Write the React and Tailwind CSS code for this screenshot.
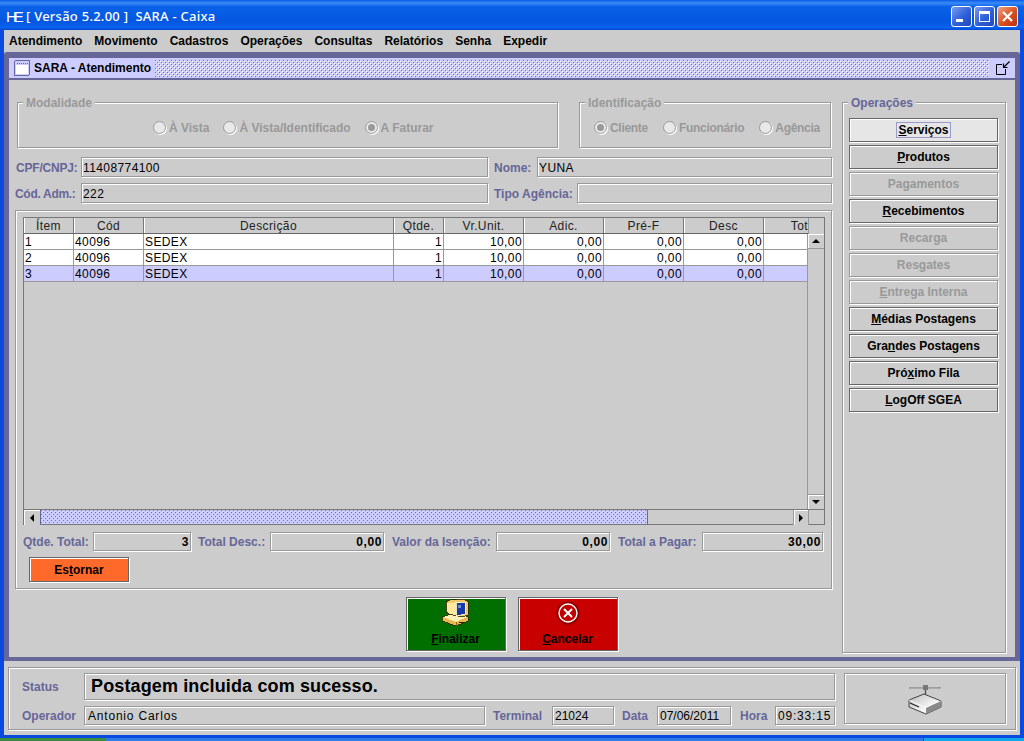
const F = { fontFamily: '"Liberation Sans", Arial, sans-serif' };

function Etched({ className = "", children }) {
  return <div className={"border border-[#999999] shadow-[1px_1px_0_#ffffff,inset_1px_1px_0_#ffffff] " + className}>{children}</div>;
}

function Group({ title, className = "", disabled, children }) {
  return (
    <Etched className={"relative " + className}>
      <span className={"absolute -top-[7px] left-[5px] bg-[#cccccc] px-[3px] text-[12px] font-bold leading-[14px] " + (disabled ? "text-[#999999]" : "text-[#666699]")}>{title}</span>
      {children}
    </Etched>
  );
}

function Radio({ label, checked, className = "", tight }) {
  return (
    <div className={"flex items-center gap-[3px] " + className}>
      <span className="flex h-[13px] w-[13px] items-center justify-center rounded-full border border-[#999999] bg-[#e8e8e8] shadow-[1px_1px_0_#ffffff]">
        {checked && <span className="h-[7px] w-[7px] rounded-full bg-[#999999]" />}
      </span>
      <span className={"text-[12px] font-bold text-[#999999] " + (tight ? "tracking-[-0.3px]" : "")}>{label}</span>
    </div>
  );
}

function Label({ children, className = "" }) {
  return <span className={"pt-[1px] text-[12px] font-bold text-[#666699] " + className}>{children}</span>;
}

function Field({ children, className = "", right, bold }) {
  return (
    <Etched className={"flex items-center pt-[1px] text-[12px] text-black " + (right ? "justify-end pr-[1px] tracking-[0.6px] " : "pl-[1px] tracking-[0.4px] ") + (bold ? "font-bold " : "") + className}>
      {children}
    </Etched>
  );
}

function SideBtn({ label, u, disabled, focused }) {
  const i = u ? label.indexOf(u) : -1;
  return (
    <button className={"flex h-[24px] w-[149px] items-center justify-center text-[12px] font-bold shadow-[1px_1px_0_#ffffff,inset_1px_1px_0_#ffffff] border " +
      (disabled ? "border-[#999999] text-[#999999] " : "border-[#666666] text-black ") + (focused ? "bg-[#e6e6e6]" : "bg-[#cccccc]")}>
      <span className={focused ? "border border-[#9999cc] px-[1px] leading-[14px]" : ""}>
        {i < 0 ? label : <>{label.slice(0, i)}<span className="underline">{u}</span>{label.slice(i + u.length)}</>}
      </span>
    </button>
  );
}

const widths = [50, 70, 250, 50, 80, 80, 80, 80, 44];
const heads = ["Ítem", "Cód", "Descrição", "Qtde.", "Vr.Unit.", "Adic.", "Pré-F", "Desc", "Tot"];

function Row({ n, selected }) {
  const cells = [n, "40096", "SEDEX", "1", "10,00", "0,00", "0,00", "0,00", ""];
  return (
    <div className={"flex h-[16px] border-b border-[#999999] " + (selected ? "bg-[#ccccff]" : "bg-white")}>
      {cells.map((c, i) => (
        <div key={i} style={{ width: widths[i] }} className={"shrink-0 overflow-hidden px-[1px] text-[12px] leading-[16px] tracking-[0.4px] text-black " + (i < 8 ? "border-r border-[#999999] " : "") + (i > 2 ? "text-right" : "text-left")}>{c}</div>
      ))}
    </div>
  );
}

function ScrollBtn({ children, className = "" }) {
  return <div className={"flex h-[15px] w-[16px] shrink-0 items-center justify-center bg-[#cccccc] shadow-[inset_1px_1px_0_#ffffff] " + className}>{children}</div>;
}

function Tri({ dir }) {
  const p = { up: "0,4 4,0 8,4", down: "0,0 8,0 4,4", left: "4,0 4,8 0,4", right: "0,0 4,4 0,8" }[dir];
  const vert = dir === "up" || dir === "down";
  return <svg width={vert ? 8 : 4} height={vert ? 4 : 8}><polygon points={p} fill="#000" /></svg>;
}

function WindowIcon() {
  return (
    <svg width="16" height="16" viewBox="0 0 16 16" shapeRendering="crispEdges">
      <rect x="0.5" y="0.5" width="15" height="15" rx="1.5" fill="#ccccff" stroke="#666699" />
      <rect x="2" y="5" width="12" height="9" fill="#ffffff" />
      <path d="M3 3.5h1M5 3.5h1M7 3.5h1M9 3.5h1M11 3.5h1M13 3.5h1" stroke="#666699" />
    </svg>
  );
}

function DetachIcon() {
  return (
    <svg width="14" height="14" viewBox="0 0 14 14" fill="none" stroke="#000">
      <path d="M6 3.5H0.5V13.5H9.5V8" />
      <path d="M13.5 0.5L7.5 6.5" strokeWidth="1.3" />
      <path d="M7.5 2.5V6.5H11.5" strokeWidth="1.2" />
    </svg>
  );
}

function Computer() {
  return (
    <svg width="29" height="28" viewBox="0 0 29 28" shapeRendering="crispEdges">
      <path d="M0 20l6-3 12 6-4 3z" fill="#003a00" />
      <path d="M1 18l14-5 12 5v4l-12 5-14-5z" fill="#e8b850" stroke="#2a2008" strokeWidth="0.8" />
      <path d="M2 18l13 5 11-5-11-4z" fill="#fff0b8" />
      <path d="M15 23v4" stroke="#8a6818" strokeWidth="1" />
      <path d="M18 23h5v1h-5z" fill="#2a2008" />
      <path d="M5 3l4-2 14-1 4 3v13l-6 2-13-3-3-2z" fill="#f0c868" stroke="#2a2008" strokeWidth="0.8" />
      <path d="M6 4l13-1v14l-10-2-3-2z" fill="#ffe8a0" />
      <path d="M15 4l9-1v12l-9 2z" fill="#1838a8" stroke="#fff4c0" strokeWidth="0.9" />
      <path d="M17 6h3v3h-3z" fill="#6890e0" />
    </svg>
  );
}

function CancelIcon() {
  return (
    <svg width="24" height="24" viewBox="0 0 24 24">
      <circle cx="12" cy="12" r="11.5" fill="#8f0000" />
      <circle cx="12" cy="12" r="9" fill="#c00000" stroke="#ffffff" strokeWidth="1.4" />
      <path d="M8 8L16 16M16 8L8 16" stroke="#ffffff" strokeWidth="2" />
    </svg>
  );
}

function Router() {
  return (
    <svg width="34" height="32" viewBox="0 0 34 32">
      <defs>
        <linearGradient id="routerTop" x1="0" y1="0" x2="1" y2="1">
          <stop offset="0" stopColor="#b8b8b8" />
          <stop offset="0.6" stopColor="#f4f4f4" />
          <stop offset="1" stopColor="#ffffff" />
        </linearGradient>
      </defs>
      <path d="M1 4.5H33" stroke="#888888" strokeWidth="2" />
      <path d="M1 3.8H33" stroke="#ffffff" strokeWidth="0.6" />
      <rect x="15" y="2" width="5" height="5" fill="#777777" />
      <path d="M17.5 7V13" stroke="#555555" strokeWidth="1.4" />
      <path d="M1 17L16 11L33 18V24L18 31L1 24Z" fill="url(#routerTop)" stroke="#444444" strokeWidth="1" />
      <path d="M1 17L18 25L33 18" fill="none" stroke="#ffffff" strokeWidth="0.8" />
      <path d="M18 25V31L33 24V18Z" fill="#8a8a8a" />
      <path d="M2 20L11 24" stroke="#222222" strokeWidth="1.3" />
    </svg>
  );
}

function TitleButton({ kind }) {
  const bg = kind === "close"
    ? "bg-[linear-gradient(135deg,#f0a080,#d8501f_55%,#b83010)]"
    : "bg-[linear-gradient(135deg,#7c9df0,#2d5fd8_55%,#2448b8)]";
  return (
    <div className={"flex h-[21px] w-[21px] items-center justify-center rounded-[3px] border border-white " + bg}>
      {kind === "min" && <span className="mt-[9px] mr-[4px] h-[3px] w-[7px] bg-white" />}
      {kind === "max" && <span className="h-[11px] w-[11px] border border-t-[3px] border-white" />}
      {kind === "close" && (
        <svg width="11" height="11" viewBox="0 0 11 11"><path d="M1 1L10 10M10 1L1 10" stroke="#fff" strokeWidth="2.2" /></svg>
      )}
    </div>
  );
}

const bumps = "bg-[radial-gradient(circle_at_0.5px_0.5px,#6f6fb0_0.7px,transparent_0.8px),radial-gradient(circle_at_2.5px_2.5px,#6f6fb0_0.7px,transparent_0.8px),radial-gradient(circle_at_1.5px_1.5px,#ffffff_0.7px,transparent_0.8px),radial-gradient(circle_at_3.5px_3.5px,#ffffff_0.7px,transparent_0.8px)] bg-[length:4px_4px]";

export default function App() {
  const menus = ["Atendimento", "Movimento", "Cadastros", "Operações", "Consultas", "Relatórios", "Senha", "Expedir"];
  return (
    <div style={F} className="flex h-[741px] w-[1024px] flex-col overflow-hidden bg-[#0a4ae0]">
      {/* Title bar */}
      <div className="flex h-[30px] shrink-0 items-center bg-[linear-gradient(180deg,#0a5ae8_0%,#3a8cf8_10%,#0a62e8_22%,#0456e0_70%,#0a62f0_92%,#0048d0_100%)] pt-[2px] pr-[6px] pl-[6px]">
        <span className="mr-[6px] w-[14px] overflow-visible text-[15px] leading-none font-normal tracking-[-3px] text-white">HE</span>
        <span style={{ fontFamily: '"Noto Sans", sans-serif' }} className="pt-[2px] text-[13px] font-medium tracking-[0.25px] whitespace-pre text-white">[ Versão 5.2.00 ]  SARA - Caixa</span>
        <div className="ml-auto flex gap-[2px]">
          <TitleButton kind="min" />
          <TitleButton kind="max" />
          <TitleButton kind="close" />
        </div>
      </div>

      {/* Window client */}
      <div className="mx-[4px] flex h-[705px] shrink-0 flex-col bg-[#cccccc]">
        <div className="flex h-[22px] shrink-0 items-center gap-[12px] pl-[5px]">
          {menus.map((m) => <span key={m} className="text-[12px] font-bold text-black">{m}</span>)}
        </div>

        {/* Internal frame */}
        <div className="flex h-[609px] shrink-0 flex-col rounded-t-[3px] border-x-[5px] border-t-[6px] border-b-[4px] border-[#666699]">
          <div className="flex h-[22px] shrink-0 items-center border-b-2 border-[#666699] bg-[#ccccff] pr-[5px] pl-[5px]">
            <WindowIcon />
            <span className="ml-[4px] text-[12px] font-bold text-black">SARA - Atendimento</span>
            <div className={"mr-[7px] ml-[4px] h-[17px] flex-1 " + bumps} />
            <DetachIcon />
          </div>

          <div className="flex min-h-0 flex-1 pt-[22px] pr-[9px] pl-[6px]">
            {/* Left column */}
            <div className="flex w-[818px] shrink-0 flex-col">
              <div className="ml-[2px] flex gap-[21px]">
                <Group title="Modalidade" disabled className="flex h-[46px] w-[541px] items-center pl-[135px]">
                  <div className="mt-[5px] flex gap-[14px]">
                    <Radio label="À Vista" />
                    <Radio label="À Vista/Identificado" />
                    <Radio label="A Faturar" checked />
                  </div>
                </Group>
                <Group title="Identificação" disabled className="flex h-[46px] w-[252px] items-center pl-[14px]">
                  <div className="mt-[5px] flex gap-[15px]">
                    <Radio label="Cliente" checked tight />
                    <Radio label="Funcionário" tight />
                    <Radio label="Agência" tight />
                  </div>
                </Group>
              </div>

              <div className="mt-[9px] flex h-[20px] items-center">
                <Label className="w-[66px] shrink-0 pl-[1px] tracking-[-0.2px]">CPF/CNPJ:</Label>
                <Field className="h-[20px] w-[407px]">11408774100</Field>
                <Label className="ml-[6px] w-[43px] shrink-0">Nome:</Label>
                <Field className="h-[20px] w-[295px]">YUNA</Field>
              </div>
              <div className="mt-[6px] flex h-[20px] items-center">
                <Label className="w-[66px] shrink-0 tracking-[-0.3px]">Cód. Adm.:</Label>
                <Field className="h-[20px] w-[407px]">222</Field>
                <Label className="ml-[6px] w-[83px] shrink-0">Tipo Agência:</Label>
                <Field className="h-[20px] w-[255px]" />
              </div>

              {/* Table panel */}
              <Etched className="mt-[7px] flex h-[379px] w-[817px] flex-col px-[7px] pt-[6px]">
                <div className="flex h-[308px] w-[802px] flex-col border border-[#777777]">
                  <div className="flex h-[16px] w-[784px] shrink-0 overflow-hidden border-b border-[#666666]">
                    {heads.map((h, i) => (
                      <div key={h} style={{ width: widths[i] }} className={"shrink-0 bg-[#cccccc] text-[12px] leading-[16px] tracking-[0.4px] text-[#222222] shadow-[inset_1px_0_0_#ffffff] " + (i < 8 ? "border-r border-[#777777] text-center" : "text-right")}>{h}</div>
                    ))}
                  </div>
                  <div className="-mt-[16px] ml-[784px] h-[16px] w-[16px] shrink-0 border-l border-[#999999]" />
                  <div className="flex min-h-0 flex-1">
                    <div className="w-[784px] shrink-0 border-r border-[#999999]">
                      <Row n="1" />
                      <Row n="2" />
                      <Row n="3" selected />
                    </div>
                    <div className="flex w-[16px] flex-col">
                      <ScrollBtn className="border-b border-[#999999]"><Tri dir="up" /></ScrollBtn>
                      <div className="flex-1" />
                      <ScrollBtn className="border-t border-[#999999]"><Tri dir="down" /></ScrollBtn>
                    </div>
                  </div>
                  <div className="flex h-[15px] shrink-0 border-t border-[#777777]">
                    <ScrollBtn><Tri dir="left" /></ScrollBtn>
                    <div className={"w-[608px] border-x border-[#666699] " + "bg-[#ccccff] bg-[radial-gradient(circle_at_0.5px_0.5px,#6f6fb0_0.7px,transparent_0.8px),radial-gradient(circle_at_2.5px_2.5px,#6f6fb0_0.7px,transparent_0.8px)] bg-[length:4px_4px]"} />
                    <div className="flex-1" />
                    <ScrollBtn className="border-x border-[#999999]"><Tri dir="right" /></ScrollBtn>
                    <div className="w-[15px]" />
                  </div>
                </div>

                <div className="mt-[7px] flex h-[19px] items-center">
                  <Label className="w-[70px] shrink-0">Qtde. Total:</Label>
                  <Field right bold className="h-[19px] w-[98px]">3</Field>
                  <Label className="ml-[7px] w-[72px] shrink-0">Total Desc.:</Label>
                  <Field right bold className="h-[19px] w-[114px]">0,00</Field>
                  <Label className="ml-[8px] w-[104px] shrink-0">Valor da Isenção:</Label>
                  <Field right bold className="h-[19px] w-[114px]">0,00</Field>
                  <Label className="ml-[8px] w-[84px] shrink-0">Total a Pagar:</Label>
                  <Field right bold className="h-[19px] w-[121px]">30,00</Field>
                </div>

                <button className="mt-[6px] ml-[6px] flex h-[25px] w-[100px] items-center justify-center border border-[#666666] bg-[#ff6a2b] text-[12px] font-bold text-black shadow-[1px_1px_0_#ffffff,inset_1px_1px_0_#ffffff]">
                  <span>Es<span className="underline">t</span>ornar</span>
                </button>
              </Etched>

              {/* Action buttons */}
              <div className="mt-[8px] flex justify-center gap-[12px] pl-[175px]">
                <button className="flex h-[54px] w-[100px] flex-col items-center justify-between border border-[#666666] bg-[#006f00] pt-[1px] pb-[4px] text-[12px] font-bold text-black shadow-[1px_1px_0_#ffffff,inset_1px_1px_0_#ffffff]">
                  <Computer />
                  <span className="leading-[14px]"><span className="underline">F</span>inalizar</span>
                </button>
                <button className="flex h-[54px] w-[100px] flex-col items-center justify-between border border-[#666666] bg-[#c80000] pt-[3px] pb-[4px] text-[12px] font-bold text-black shadow-[1px_1px_0_#ffffff,inset_1px_1px_0_#ffffff]">
                  <CancelIcon />
                  <span className="leading-[14px]"><span className="underline">C</span>ancelar</span>
                </button>
              </div>
            </div>

            {/* Right column */}
            <Group title="Operações" className="ml-[9px] flex h-[551px] w-[164px] shrink-0 flex-col gap-[3px] pt-[15px] pl-[6px]">
              <SideBtn label="Serviços" u="S" focused />
              <SideBtn label="Produtos" u="P" />
              <SideBtn label="Pagamentos" u="g" disabled />
              <SideBtn label="Recebimentos" u="R" />
              <SideBtn label="Recarga" disabled />
              <SideBtn label="Resgates" u="g" disabled />
              <SideBtn label="Entrega Interna" u="E" disabled />
              <SideBtn label="Médias Postagens" u="M" />
              <SideBtn label="Grandes Postagens" u="n" />
              <SideBtn label="Próximo Fila" u="x" />
              <SideBtn label="LogOff SGEA" u="L" />
            </Group>
          </div>
        </div>

        {/* Status panel */}
        <Etched className="mx-[4px] mt-[6px] flex h-[63px] items-center gap-[9px] pl-[9px]">
          <div className="flex w-[817px] shrink-0 flex-col gap-[6px]">
            <div className="flex h-[27px] items-center">
              <Label className="w-[66px] shrink-0 pl-[4px]">Status</Label>
              <Field className="h-[27px] w-[751px] !pl-[6px] !text-[18px] !font-bold !tracking-[0.13px]">Postagem incluida com sucesso.</Field>
            </div>
            <div className="flex h-[19px] items-center">
              <Label className="w-[66px] shrink-0 pl-[4px]">Operador</Label>
              <Field className="h-[19px] w-[401px] !pl-[3px] !tracking-[0.8px]">Antonio Carlos</Field>
              <Label className="ml-[8px] w-[59px] shrink-0">Terminal</Label>
              <Field className="h-[19px] w-[62px] !pl-[2px] !tracking-[0px]">21024</Field>
              <Label className="ml-[8px] w-[35px] shrink-0">Data</Label>
              <Field className="h-[19px] w-[74px] !pl-[2px] !tracking-[0px]">07/06/2011</Field>
              <Label className="ml-[9px] w-[35px] shrink-0">Hora</Label>
              <Field className="h-[19px] w-[60px] !pl-[2px] !tracking-[0.8px]">09:33:15</Field>
            </div>
          </div>
          <Etched className="flex h-[51px] w-[162px] shrink-0 items-center justify-center">
            <Router />
          </Etched>
        </Etched>
      </div>

      {/* Taskbar sliver */}
      <div className="mt-[3px] flex h-[3px] shrink-0">
        <div className="w-[106px] bg-[#3c8c3c]" />
        <div className="flex-1 bg-[#2f7be8]" />
        <div className="w-[1px] bg-[#1a4ab0]" />
        <div className="w-[100px] bg-[#12a8e8]" />
      </div>
    </div>
  );
}
